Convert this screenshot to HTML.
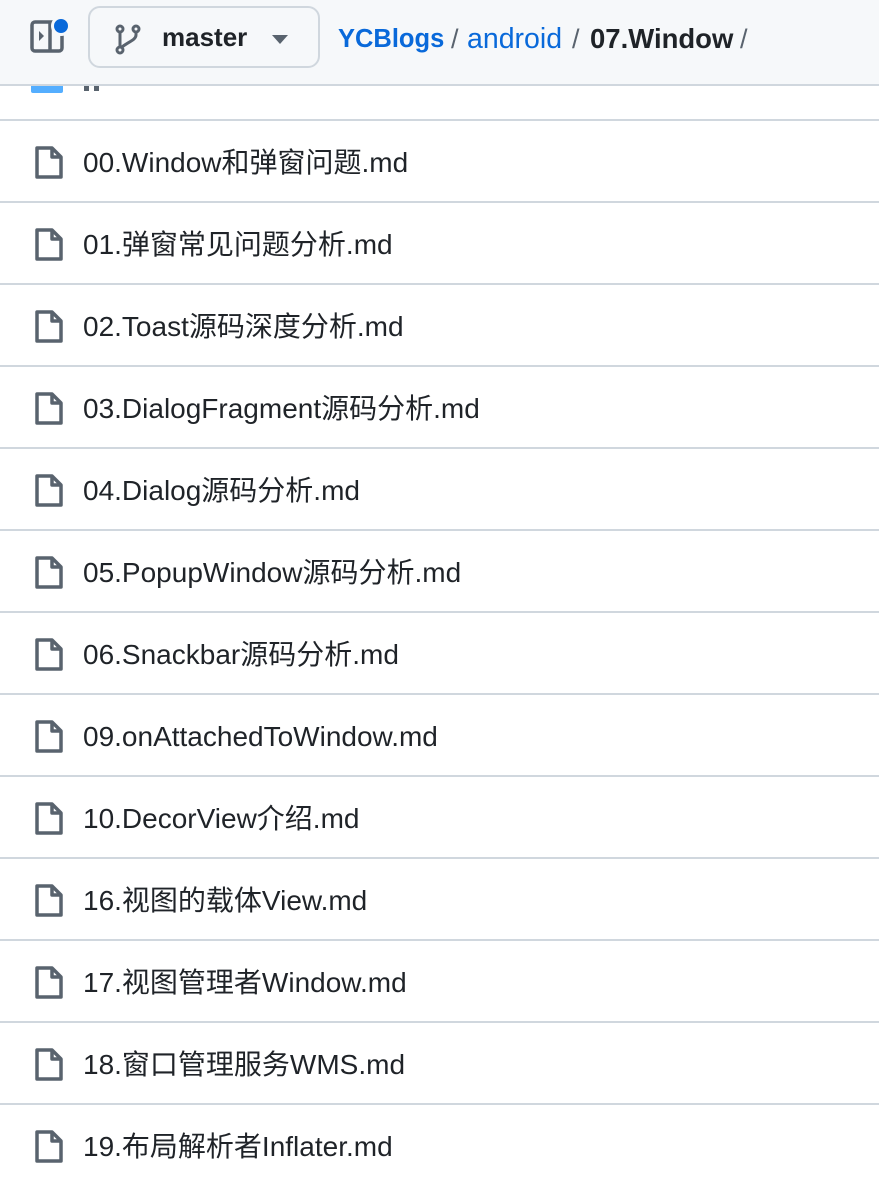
<!DOCTYPE html>
<html><head><meta charset="utf-8"><style>
*{margin:0;padding:0;box-sizing:border-box}
body{width:879px;height:1182px;overflow:hidden;background:#fff;font-family:"Liberation Sans","Noto Sans CJK SC",sans-serif;color:#1f2328;position:relative}
.hdr{position:absolute;left:0;top:0;width:879px;height:86px;background:#f6f8fa;border-bottom:2px solid #d0d7de;z-index:2}
.btn{position:absolute;left:88px;top:6px;width:232px;height:62px;border:2px solid #d0d7de;border-radius:12px;background:#f6f8fa}
.btn span{position:absolute;left:72px;top:14px;font-size:26px;font-weight:bold;color:#1f2328}
.c{position:absolute;top:21px;font-size:27px;line-height:36px;white-space:nowrap}
.b{color:#0969da}
.s{color:#59636e}
.row{position:absolute;left:0;width:879px;height:82px;border-top:2px solid #d0d7de}
.row svg{position:absolute;left:33px;top:23px}
.row span{position:absolute;left:83px;top:24px;font-size:28px;line-height:36px;white-space:nowrap;color:#1f2328}
</style></head><body>
<div class="hdr">
<svg style="position:absolute;left:29px;top:16px" width="42" height="38" viewBox="0 0 42 38"><rect x="3" y="6" width="30" height="29" rx="3" fill="none" stroke="#59636e" stroke-width="3.5"/><line x1="21" y1="6" x2="21" y2="35" stroke="#59636e" stroke-width="3.5"/><path d="M10 15l5 5-5 5z" fill="#59636e"/><circle cx="32" cy="10" r="8.5" fill="#0969da" stroke="#f6f8fa" stroke-width="3"/></svg>
<div class="btn">
<svg style="position:absolute;left:24px;top:16px" width="28" height="32" viewBox="0 0 28 32"><g fill="none" stroke="#59636e" stroke-width="3"><circle cx="6" cy="26" r="3"/><circle cx="6" cy="5" r="3"/><circle cx="22" cy="5" r="3"/><path d="M6 8v15M22 8v3c0 5-8 7-14 12"/></g></svg>
<span>master</span>
<svg style="position:absolute;left:182px;top:27px" width="16" height="10" viewBox="0 0 16 10"><path d="M0 0h16l-8 9z" fill="#59636e"/></svg>
</div>
<span class="c b" style="left:338px;font-weight:bold;font-size:25.5px">YCBlogs</span>
<span class="c s" style="left:451px">/</span>
<span class="c b" style="left:467px;font-size:28.5px">android</span>
<span class="c s" style="left:572px">/</span>
<span class="c" style="left:590px;font-weight:bold;font-size:27.5px">07.Window</span>
<span class="c s" style="left:740px">/</span>
</div>
<div style="position:absolute;left:31px;top:80px;width:32px;height:13px;background:#54aeff;border-radius:2px"></div>
<div style="position:absolute;left:84px;top:86px;width:5px;height:5px;background:#59636e"></div>
<div style="position:absolute;left:94px;top:86px;width:5px;height:5px;background:#59636e"></div>
<div id="rows"></div>
<script>
var n=["00.Window和弹窗问题.md","01.弹窗常见问题分析.md","02.Toast源码深度分析.md","03.DialogFragment源码分析.md","04.Dialog源码分析.md","05.PopupWindow源码分析.md","06.Snackbar源码分析.md","09.onAttachedToWindow.md","10.DecorView介绍.md","16.视图的载体View.md","17.视图管理者Window.md","18.窗口管理服务WMS.md","19.布局解析者Inflater.md"];
var h="";n.forEach(function(t,i){h+='<div class="row" style="top:'+(119+i*82)+'px"><svg width="32" height="36" viewBox="0 0 32 36"><path d="M4 4h15l9 9v20H4z M19 4v9h9" fill="none" stroke="#59636e" stroke-width="3.5" stroke-linejoin="round"/></svg><span>'+t+'</span></div>';});
document.getElementById("rows").innerHTML=h;
</script>
</body></html>
